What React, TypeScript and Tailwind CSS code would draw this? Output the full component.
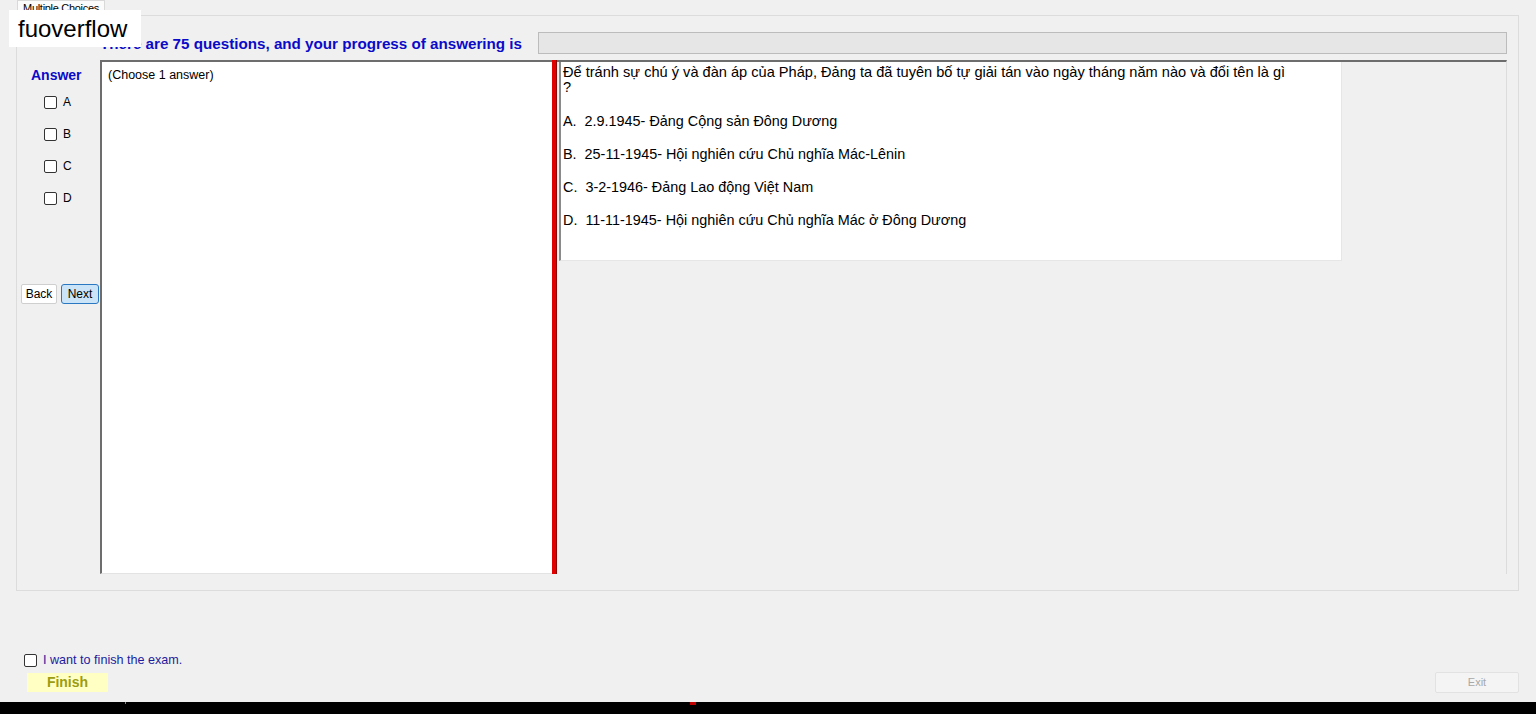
import React from 'react';

const options = [
  'A.  2.9.1945- Đảng Cộng sản Đông Dương',
  'B.  25-11-1945- Hội nghiên cứu Chủ nghĩa Mác-Lênin',
  'C.  3-2-1946- Đảng Lao động Việt Nam',
  'D.  11-11-1945- Hội nghiên cứu Chủ nghĩa Mác ở Đông Dương',
];

function Box() {
  return <div className="h-[13px] w-[13px] shrink-0 rounded-[2px] border border-[#333333] bg-white" />;
}

/**
 * Exam screen: answer checkboxes, question panel and finish controls
 */
export default function App() {
  return (
    <div className="relative flex h-[714px] w-[1536px] flex-col overflow-hidden bg-[#f0f0f0] font-['Liberation_Sans',Arial,sans-serif] text-black">
      {/* Tab header */}
      <div className="ml-[17px] flex h-[15px] w-[88px] items-end justify-center border border-b-0 border-[#d9d9d9] bg-[#fbfbfb]">
        <span className="text-[11px] leading-[13px] tracking-[-0.3px]">Multiple Choices</span>
      </div>

      {/* Tab page */}
      <div className="ml-[16px] flex h-[576px] w-[1503px] flex-col border border-[#dcdcdc] bg-[#f0f0f0] pr-[11px]">
        {/* Progress row */}
        <div className="flex h-[44px] items-end pb-[8px]">
          <div className="w-[521px] whitespace-nowrap pl-[83px] text-[15.2px] font-bold leading-[16px] text-[#0a0ac8]">
            There are 75 questions, and your progress of answering is
          </div>
          <div className="mb-[-2px] h-[22px] flex-1 border border-[#bcbcbc] bg-[#e6e6e6]" />
        </div>

        {/* Main row */}
        <div className="flex h-[514px]">
          {/* Answer column */}
          <div className="flex w-[83px] flex-col">
            <div className="mt-[7px] pl-[14px] text-[14px] font-bold leading-[16px] text-[#0a0ac8]">Answer</div>
            <div className="mt-[13px] flex flex-col gap-[19px] pl-[27px]">
              {['A', 'B', 'C', 'D'].map((l) => (
                <div key={l} className="flex h-[13px] items-center gap-[6px]">
                  <Box />
                  <span className="text-[12px] leading-[13px]">{l}</span>
                </div>
              ))}
            </div>
            <div className="mt-[79px] flex gap-[4px] pl-[4px]">
              <div className="flex h-[20px] w-[36px] items-center justify-center rounded-[2px] border border-[#cfcfcf] bg-white text-[12px]">
                Back
              </div>
              <div className="flex h-[20px] w-[38px] items-center justify-center rounded-[3px] border border-[#2b78c2] bg-[#cce4f7] text-[12px]">
                Next
              </div>
            </div>
          </div>

          {/* Left text panel */}
          <div className="w-[452px] border-l-2 border-t-2 border-b border-[#6d6d6d] border-b-[#e3e3e3] bg-white px-[6px] pt-[0px]">
            <span className="text-[12.5px] leading-[20px]">(Choose 1 answer)</span>
          </div>

          {/* Splitter */}
          <div className="w-[5px] border-r border-[#8a0000] bg-[#e00000]" />

          {/* Right panel */}
          <div className="flex-1 border-t-2 border-r border-[#6d6d6d] border-r-[#dcdcdc]">
            <div className="ml-[2px] h-[199px] w-[783px] border-l-2 border-b border-r border-[#8a8a8a] border-b-[#e6e6e6] border-r-[#e6e6e6] bg-white pl-[2px] pt-[3px]">
              <div className="text-[14.6px] leading-[15px]">
                Để tránh sự chú ý và đàn áp của Pháp, Đảng ta đã tuyên bố tự giải tán vào ngày tháng năm nào và đổi tên là gì
                <br />?
              </div>
              <div className="mt-[18px] flex flex-col gap-[17px]">
                {options.map((o) => (
                  <div key={o} className="whitespace-pre text-[14.4px] leading-[16px]">
                    {o}
                  </div>
                ))}
              </div>
            </div>
          </div>
        </div>
      </div>

      {/* Finish area */}
      <div className="mt-[62px] flex items-center gap-[6px] pl-[24px]">
        <Box />
        <span className="text-[12.6px] leading-[14px] text-[#1c1c9e]">I want to finish the exam.</span>
      </div>
      <div className="mt-[5px] flex items-start justify-between pl-[27px] pr-[17px]">
        <div className="mt-[1px] flex h-[19px] w-[81px] items-center justify-center bg-[#ffffc4] text-[14px] font-bold text-[#9c9c10]">
          Finish
        </div>
        <div className="flex h-[21px] w-[84px] items-center justify-center rounded-[2px] border border-[#e2e2e2] bg-[#f4f4f4] text-[11px] text-[#a8a8a8]">
          Exit
        </div>
      </div>

      {/* Taskbar strip */}
      <div className="mt-auto flex h-[12px] items-start bg-black">
        <div className="ml-[125px] h-[2px] w-[1px] bg-[#888888]" />
        <div className="ml-[564px] h-[3px] w-[6px] bg-[#c00000]" />
      </div>

      {/* Watermark */}
      <div className="absolute left-[9px] top-[10px] flex h-[37px] w-[132px] items-center bg-white pl-[9px] text-[24px] leading-[26px]">
        fuoverflow
      </div>
    </div>
  );
}
